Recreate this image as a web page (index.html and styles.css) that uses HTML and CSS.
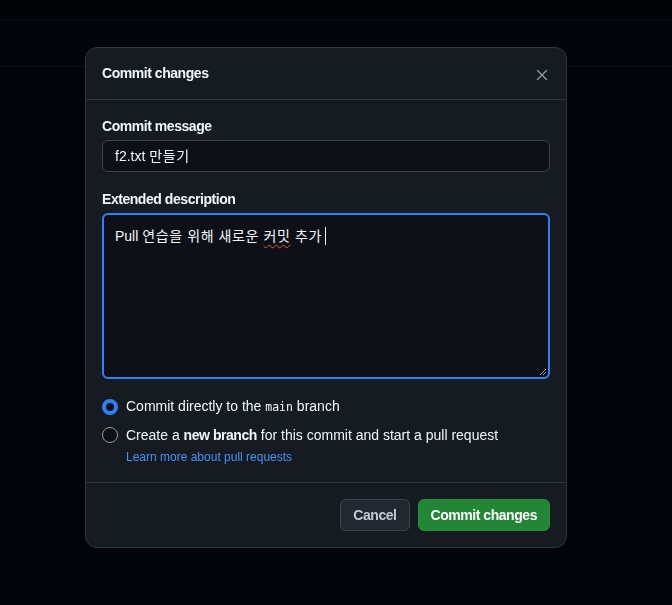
FILE: index.html
```html
<!DOCTYPE html>
<html lang="ko">
<head>
<meta charset="utf-8">
<title>Commit changes</title>
<link rel="stylesheet" href="styles.css">
</head>
<body>
<div class="page">
  <div class="topbar"></div>
  <div class="subbar"></div>
</div>
<div class="overlay">
  <div class="dialog" role="dialog">
    <div class="dialog-header">
      <h1 class="dialog-title">Commit changes</h1>
      <button class="close-btn" aria-label="Close">
        <svg width="16" height="16" viewBox="0 0 16 16"><path d="M3.5 3.5 L12.5 12.5 M12.5 3.5 L3.5 12.5" stroke="#9198a1" stroke-width="1.4" stroke-linecap="round"/></svg>
      </button>
    </div>
    <div class="dialog-body">
      <label class="field-label">Commit message</label>
      <div class="text-input">f2.txt <span class="ko">만들기</span></div>
      <label class="field-label second">Extended description</label>
      <div class="textarea">Pull <span class="ko">연습을 위해 새로운 <span class="misspelled">커밋</span> 추가</span><span class="caret"></span>
        <svg class="resize" width="8" height="8" viewBox="0 0 8 8"><path d="M7 1 L1 7 M7 4 L4 7" stroke="#9198a1" stroke-width="1"/></svg>
      </div>
      <div class="radio-row">
        <span class="radio checked"></span>
        <span class="radio-text">Commit directly to the <code>main</code> branch</span>
      </div>
      <div class="radio-row second">
        <span class="radio"></span>
        <span class="radio-text">Create a <strong>new branch</strong> for this commit and start a pull request</span>
      </div>
      <a class="learn-link" href="#">Learn more about pull requests</a>
    </div>
    <div class="dialog-footer">
      <button class="btn btn-cancel">Cancel</button>
      <button class="btn btn-primary">Commit changes</button>
    </div>
  </div>
</div>
</body>
</html>
```

FILE: styles.css
```css
html, body {
  margin: 0;
  padding: 0;
}
body {
  background: #02040a;
  font-family: "Liberation Sans", "Noto Sans CJK KR", sans-serif;
  color: #f0f6fc;
  font-size: 14px;
  width: 672px;
  height: 605px;
  overflow: hidden;
}
.page {
  height: 605px;
}
.topbar {
  height: 19px;
  background: #010307;
  border-bottom: 1px solid #0b0e14;
}
.subbar {
  height: 46px;
  background: #02050a;
  border-bottom: 1px solid #0b0e14;
}
.overlay {
  position: fixed;
  inset: 0;
  padding: 47px 0 0 85px;
}
.dialog {
  width: 480px;
  height: 499px;
  background: #161b22;
  border: 1px solid #30363d;
  border-radius: 12px;
  display: flex;
  flex-direction: column;
}
.dialog-header {
  height: 52px;
  box-sizing: border-box;
  padding: 0 8px 0 16px;
  display: flex;
  align-items: center;
  justify-content: space-between;
  border-bottom: 1px solid #30363d;
}
.dialog-title {
  margin: 0;
  font-size: 14px;
  font-weight: 700;
  letter-spacing: -0.45px;
  line-height: 20px;
  color: #f0f6fc;
  position: relative;
  top: -1px;
}
.close-btn {
  width: 32px;
  height: 32px;
  background: transparent;
  border: 0;
  padding: 0;
  display: flex;
  align-items: center;
  justify-content: center;
  margin-top: 2px;
}
.dialog-body {
  padding: 16px 16px 0 16px;
  display: flex;
  flex-direction: column;
  flex: 1;
}
.field-label {
  font-weight: 700;
  letter-spacing: -0.45px;
  font-size: 14px;
  line-height: 20px;
  margin-bottom: 4px;
  color: #f0f6fc;
}
.field-label.second {
  margin-top: 17px;
}
.ko {
  letter-spacing: 0.6px;
}
.text-input {
  height: 32px;
  box-sizing: border-box;
  background: #0d1117;
  border: 1px solid #3d444d;
  border-radius: 6px;
  padding: 0 12px;
  display: flex;
  align-items: center;
  gap: 4px;
  line-height: 20px;
  color: #f0f6fc;
}
.textarea {
  height: 166px;
  box-sizing: border-box;
  background: #0d1117;
  border: 2px solid #2f81f7;
  border-radius: 6px;
  padding: 11px 11px;
  line-height: 20px;
  color: #f0f6fc;
  position: relative;
}
.misspelled {
  text-decoration: underline wavy #e5534b;
  text-decoration-thickness: 1px;
  text-underline-offset: 3px;
}
.caret {
  display: inline-block;
  width: 1px;
  height: 18px;
  background: #f0f6fc;
  vertical-align: -4px;
  margin-left: 3px;
}
.resize {
  position: absolute;
  right: 1px;
  bottom: 1px;
}
.radio-row {
  display: flex;
  align-items: center;
  gap: 8px;
  margin-top: 17px;
  line-height: 20px;
}
.radio-row.second {
  margin-top: 8px;
}
.radio {
  width: 16px;
  height: 16px;
  box-sizing: border-box;
  border-radius: 50%;
  border: 1px solid #9198a1;
  background: #0d1117;
  flex: none;
}
.radio.checked {
  border: 4px solid #2f81f7;
}
.radio-text {
  color: #f0f6fc;
}
.radio-text code {
  font-family: "DejaVu Sans Mono", "Liberation Mono", monospace;
  font-size: 11.5px;
}
.radio-text strong {
  font-weight: 700;
  letter-spacing: -0.45px;
}
.learn-link {
  margin: 3px 0 0 24px;
  font-size: 12px;
  line-height: 18px;
  color: #4493f8;
  text-decoration: none;
}
.dialog-footer {
  border-top: 1px solid #30363d;
  padding: 16px;
  display: flex;
  justify-content: flex-end;
  gap: 8px;
}
.btn {
  height: 32px;
  box-sizing: border-box;
  border-radius: 6px;
  font-family: inherit;
  font-size: 14px;
  font-weight: 700;
  letter-spacing: -0.45px;
  padding: 0 12px;
  line-height: 20px;
}
.btn-cancel {
  background: #212830;
  border: 1px solid #3d444d;
  color: #c4cad2;
}
.btn-primary {
  background: #238636;
  border: 1px solid #2b8a3e;
  color: #ffffff;
}
```
